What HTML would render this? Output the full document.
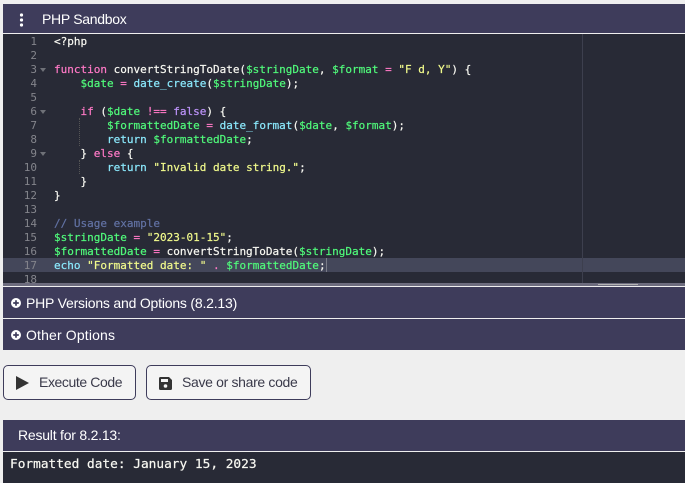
<!DOCTYPE html>
<html><head><meta charset="utf-8"><style>
html,body{margin:0;padding:0;width:685px;height:483px;overflow:hidden;background:#efefef;font-family:"Liberation Sans",sans-serif}
.a{position:absolute}
.bar{position:absolute;left:3px;width:682px;background:#3e3c5b;color:#fff;white-space:nowrap}
#ed{position:absolute;left:3px;top:34px;width:682px;height:249px;background:#282a36;overflow:hidden}
.ln{position:absolute;left:0;width:682px;height:14px;font:11px/14px "DejaVu Sans Mono",monospace;white-space:pre;color:#f8f8f2;-webkit-text-stroke:0.2px}
.n{position:absolute;left:0;top:1px;width:34px;text-align:right;color:#84858c;-webkit-text-stroke:0}
.c{position:absolute;left:51px;top:1px}
.k{color:#ff79c6}.v{color:#50fa7b}.f{color:#8be9fd}.s{color:#f1fa8c}.b{color:#bd93f9}.m{color:#6272a4}
.ar{position:absolute;left:37px;top:6px;width:0;height:0;border-left:3px solid transparent;border-right:3px solid transparent;border-top:4px solid #6f7178}
.btn{position:absolute;top:365px;height:33px;box-sizing:content-box;border:1px solid #3e3c5b;border-radius:5px;background:#f4f4f4;color:#3a3a4a;font-size:14px;line-height:33px;white-space:nowrap}
</style></head><body>
<div class="bar" style="top:4px;height:29px;font-size:14px;line-height:30px"><span class="a" style="left:39px;top:0;letter-spacing:-0.3px">PHP Sandbox</span>
<svg class="a" style="left:16px;top:9px" width="5" height="14"><circle cx="2.5" cy="2" r="1.6" fill="#fff"/><circle cx="2.5" cy="7" r="1.6" fill="#fff"/><circle cx="2.5" cy="12" r="1.6" fill="#fff"/></svg></div>
<div id="ed">
<div class="a" style="left:0;top:224px;width:682px;height:14px;background:#44475a"></div>
<div class="a" style="left:579px;top:0;width:1px;height:249px;background:#3d3f4e"></div>
<div class="a" style="left:76px;top:84px;width:0;height:28px;border-left:1px dotted #555"></div>
<div class="a" style="left:76px;top:126px;width:0;height:14px;border-left:1px dotted #555"></div>
<div class="a" style="left:323px;top:224px;width:1px;height:14px;background:#7a7c88"></div>
<div class="ln" style="top:0"><span class="n">1</span><span class="c">&lt;?php</span></div>
<div class="ln" style="top:14px"><span class="n">2</span></div>
<div class="ln" style="top:28px"><span class="n">3</span><i class="ar"></i><span class="c"><span class="k">function</span> convertStringToDate(<span class="v">$stringDate</span>, <span class="v">$format</span> <span class="k">=</span> <span class="s">"F d, Y"</span>) {</span></div>
<div class="ln" style="top:42px"><span class="n">4</span><span class="c">    <span class="v">$date</span> <span class="k">=</span> <span class="f">date_create</span>(<span class="v">$stringDate</span>);</span></div>
<div class="ln" style="top:56px"><span class="n">5</span></div>
<div class="ln" style="top:70px"><span class="n">6</span><i class="ar"></i><span class="c">    <span class="k">if</span> (<span class="v">$date</span> <span class="k">!==</span> <span class="b">false</span>) {</span></div>
<div class="ln" style="top:84px"><span class="n">7</span><span class="c">        <span class="v">$formattedDate</span> <span class="k">=</span> <span class="f">date_format</span>(<span class="v">$date</span>, <span class="v">$format</span>);</span></div>
<div class="ln" style="top:98px"><span class="n">8</span><span class="c">        <span class="f">return</span> <span class="v">$formattedDate</span>;</span></div>
<div class="ln" style="top:112px"><span class="n">9</span><i class="ar"></i><span class="c">    } <span class="k">else</span> {</span></div>
<div class="ln" style="top:126px"><span class="n">10</span><span class="c">        <span class="f">return</span> <span class="s">"Invalid date string."</span>;</span></div>
<div class="ln" style="top:140px"><span class="n">11</span><span class="c">    }</span></div>
<div class="ln" style="top:154px"><span class="n">12</span><span class="c">}</span></div>
<div class="ln" style="top:168px"><span class="n">13</span></div>
<div class="ln" style="top:182px"><span class="n">14</span><span class="c m">// Usage example</span></div>
<div class="ln" style="top:196px"><span class="n">15</span><span class="c"><span class="v">$stringDate</span> <span class="k">=</span> <span class="s">"2023-01-15"</span>;</span></div>
<div class="ln" style="top:210px"><span class="n">16</span><span class="c"><span class="v">$formattedDate</span> <span class="k">=</span> convertStringToDate(<span class="v">$stringDate</span>);</span></div>
<div class="ln" style="top:224px"><span class="n">17</span><span class="c"><span class="f">echo</span> <span class="s">"Formatted date: "</span> <span class="k">.</span> <span class="v">$formattedDate</span>;</span></div>
<div class="ln" style="top:238px"><span class="n">18</span></div>
</div>
<div class="a" style="left:3px;top:283px;width:682px;height:3px;background:#6d6c7e"></div>
<div class="a" style="left:598px;top:284px;width:40px;height:1px;background:#b4b4b4"></div>
<div class="bar" style="top:287px;height:31px;font-size:14px;line-height:32px"><span class="a" style="left:23px;top:0;letter-spacing:-0.2px">PHP Versions and Options (8.2.13)</span>
<svg class="a" style="left:8px;top:11px" width="10" height="10" viewBox="0 0 10 10"><circle cx="5" cy="5" r="5" fill="#fff"/><path d="M5 2.2v5.6M2.2 5h5.6" stroke="#3e3c5b" stroke-width="1.7"/></svg></div>
<div class="bar" style="top:319px;height:31px;font-size:14px;line-height:32px"><span class="a" style="left:23px;top:0;letter-spacing:0.15px">Other Options</span>
<svg class="a" style="left:8px;top:11px" width="10" height="10" viewBox="0 0 10 10"><circle cx="5" cy="5" r="5" fill="#fff"/><path d="M5 2.2v5.6M2.2 5h5.6" stroke="#3e3c5b" stroke-width="1.7"/></svg></div>
<div class="btn" style="left:3px;width:131px"><svg class="a" style="left:12px;top:10px" width="13" height="14"><path d="M0 0L13 7L0 14Z" fill="#333"/></svg><span class="a" style="left:35px;top:0;letter-spacing:-0.4px">Execute Code</span></div>
<div class="btn" style="left:146px;width:163px"><svg class="a" style="left:12px;top:11px" width="13" height="13" viewBox="0 0 13 13"><path d="M1.5 0H10L13 3V11.5A1.5 1.5 0 0 1 11.5 13H1.5A1.5 1.5 0 0 1 0 11.5V1.5A1.5 1.5 0 0 1 1.5 0Z" fill="#333"/><rect x="2" y="2" width="7" height="3" fill="#f4f4f4"/><circle cx="6.5" cy="9" r="1.8" fill="#f4f4f4"/></svg><span class="a" style="left:35px;top:0;letter-spacing:-0.33px">Save or share code</span></div>
<div class="bar" style="top:420px;height:31px;font-size:14px;line-height:31px"><span class="a" style="left:15px;top:0;letter-spacing:-0.22px">Result for 8.2.13:</span></div>
<div class="a" style="left:3px;top:452px;width:682px;height:31px;background:#282a36;color:#f8f8f2;font:12.8px/26px 'DejaVu Sans Mono',monospace;white-space:pre;-webkit-text-stroke:0.2px"><span class="a" style="left:7px;top:0">Formatted date: January 15, 2023</span></div>
</body></html>
